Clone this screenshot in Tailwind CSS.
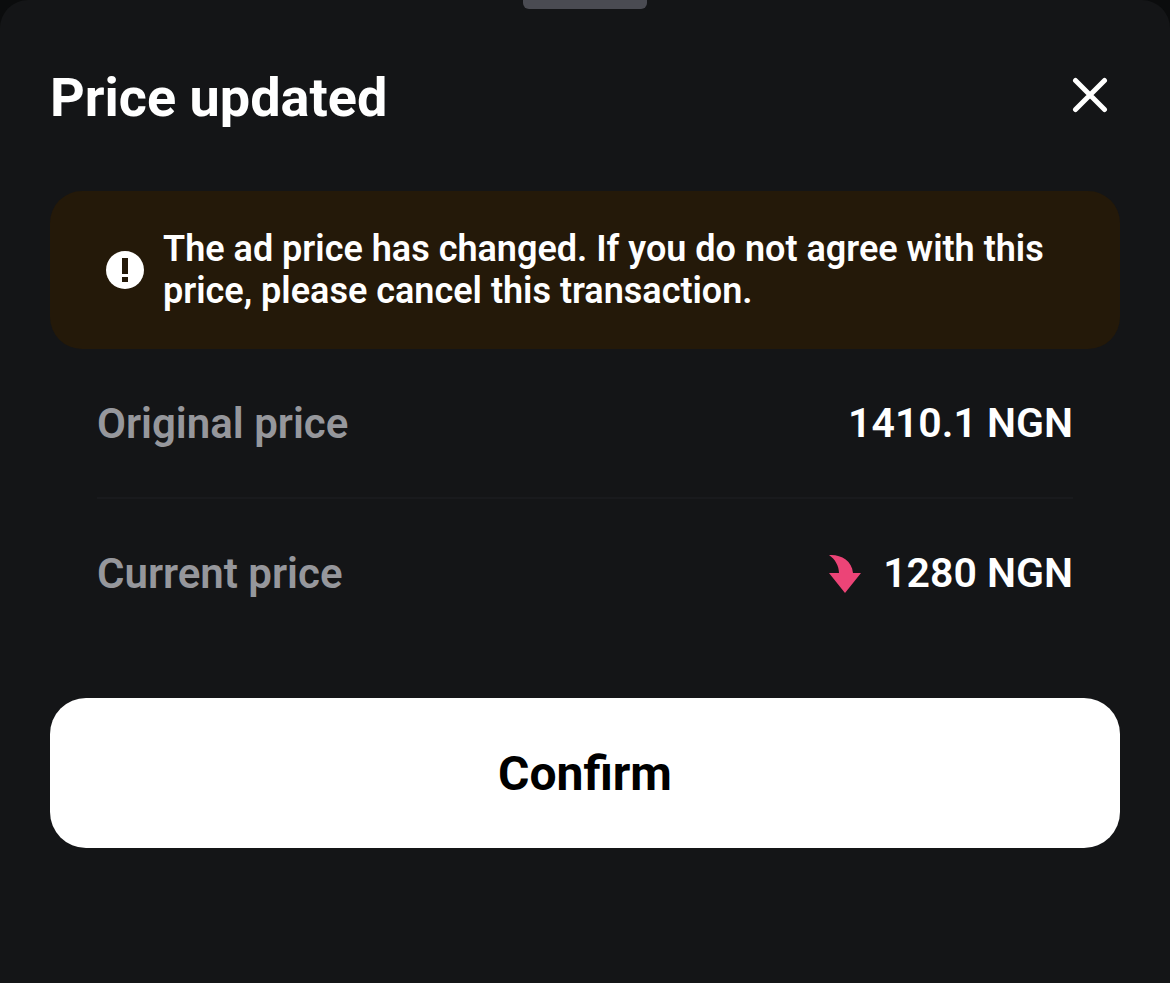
<!doctype html>
<html>
<head>
<script src="https://cdn.jsdelivr.net/npm/@tailwindcss/browser@4"></script>
</head>
<body class="bg-[#0b0c0d]">
<div class="relative w-[1170px] h-[983px] overflow-hidden rounded-t-[28px] bg-[#141517] font-['Roboto',sans-serif] text-white">
  <div class="absolute left-[523px] top-0 w-[124px] h-[9px] rounded-b-[6px] bg-[#4a4b52]"></div>
  <div class="px-[50px] pt-[68px] flex flex-col">
    <div class="flex items-center justify-between h-[58px]">
      <h1 class="text-[54px] leading-[58px] font-bold mt-[1px]">Price updated</h1>
      <svg class="mr-[12px] -mt-[5px]" width="36" height="36" viewBox="0 0 36 36" fill="none" stroke="#fff" stroke-width="5" stroke-linecap="round"><path d="M3.500 3.500 L32.500 32.500 M32.500 3.500 L3.500 32.500"/></svg>
    </div>
    <div class="mt-[65px] h-[158px] rounded-[32px] bg-[#241909] flex items-center pl-[56px] pr-[40px] gap-[19px]">
      <svg class="shrink-0" width="38" height="38" viewBox="0 0 38 38"><circle cx="19" cy="19" r="19" fill="#fff"/><rect x="16" y="7" width="6" height="16" fill="#241909"/><rect x="16" y="26" width="6" height="5" fill="#241909"/></svg>
      <p class="text-[36px] leading-[42px] font-semibold">The ad price has changed. If you do not agree with this price, please cancel this transaction.</p>
    </div>
    <div class="mx-[47px] flex items-center justify-between h-[150px] border-b-2 border-[#191a1d]">
      <span class="text-[42px] font-semibold text-[#96979c]">Original price</span>
      <span class="text-[41px] font-semibold mt-[2px]">1410.1 NGN</span>
    </div>
    <div class="mx-[47px] flex items-center justify-between h-[148px]">
      <span class="text-[42px] font-semibold text-[#96979c]">Current price</span>
      <span class="flex items-center gap-[23px] text-[41px] font-semibold mt-[1px]">
        <svg class="-mr-[2px] mt-[1px]" width="34" height="40" viewBox="0 0 34 40"><path d="M1 1 C 12 0, 24 6, 25 19 L33 19 L17 39 L1 19 L11 19 C 11 12, 7 5, 1 1 Z" fill="#ec4477"/></svg>
        1280 NGN
      </span>
    </div>
    <button class="mt-[51px] h-[150px] rounded-[36px] bg-white text-black text-[48px] font-bold flex items-center justify-center pt-[2px]">Confirm</button>
  </div>
</div>
</body>
</html>
